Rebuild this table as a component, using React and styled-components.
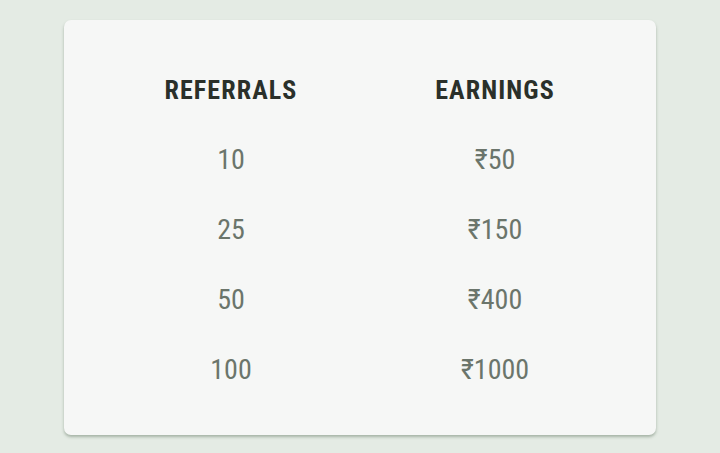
import { Fragment } from "react";
import styled, { createGlobalStyle } from "styled-components";

const GlobalStyle = createGlobalStyle`
  html, body {
    margin: 0;
    padding: 0;
    background: #e4ebe4;
  }
  body {
    font-family: "Roboto", "Liberation Sans Narrow", sans-serif;
  }
`;

const Page = styled.div`
  width: 720px;
  height: 453px;
  padding: 20px 64px 0 64px;
  box-sizing: border-box;
`;

const Card = styled.div`
  height: 415px;
  background: #f6f7f6;
  border-radius: 7px;
  box-shadow: 0 2px 3px rgba(90, 110, 90, 0.45);
  padding: 35px 29px 0 35px;
  box-sizing: border-box;
`;

const Table = styled.div`
  display: grid;
  grid-template-columns: 264px 264px;
  grid-auto-rows: 70px;
`;

const Cell = styled.div`
  display: flex;
  align-items: center;
  justify-content: center;
  height: 70px;
  line-height: 1;
  font-stretch: 75%;
  font-size: ${(p) => (p.$head ? "26px" : "28px")};
  font-weight: ${(p) => (p.$head ? 700 : 400)};
  letter-spacing: ${(p) => (p.$head ? "1.1px" : "0")};
  color: ${(p) => (p.$head ? "#2a302a" : "#6b756b")};
`;

const rows = [
  ["10", "₹50"],
  ["25", "₹150"],
  ["50", "₹400"],
  ["100", "₹1000"],
];

export default function App() {
  return (
    <>
      <GlobalStyle />
      <Page>
        <Card>
          <Table>
            <Cell $head>REFERRALS</Cell>
            <Cell $head>EARNINGS</Cell>
            {rows.map(([ref, earn]) => (
              <Fragment key={ref}>
                <Cell>{ref}</Cell>
                <Cell>{earn}</Cell>
              </Fragment>
            ))}
          </Table>
        </Card>
      </Page>
    </>
  );
}
